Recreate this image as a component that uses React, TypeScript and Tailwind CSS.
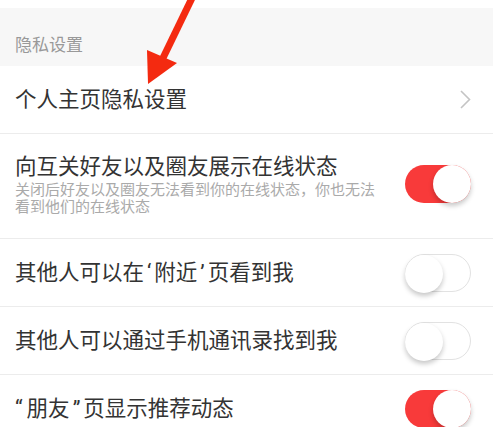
import React from "react";

const font = { fontFamily: 'Roboto, "Noto Sans CJK SC", "Noto Sans", sans-serif' };

function Toggle({ on }: { on: boolean }) {
  return (
    <div
      className={
        "relative w-[66px] h-[38px] rounded-full shrink-0 " +
        (on ? "bg-[#f83a3a]" : "bg-white border border-[#e2e2e2]")
      }
    >
      <div
        className={
          "absolute top-[0px] w-[38px] h-[38px] rounded-full bg-white shadow-[0_3px_5px_rgba(0,0,0,0.22)] " +
          (on ? "right-0" : "-left-px -top-px")
        }
      />
    </div>
  );
}

function Q({ c }: { c: string }) {
  return <span className="px-[3px]">{c}</span>;
}

function Row({
  title,
  sub,
  on,
  h = "h-[67px]",
}: {
  title: React.ReactNode;
  sub?: string;
  on: boolean;
  h?: string;
}) {
  return (
    <div className={`flex items-center justify-between pl-[15px] pr-[22px] border-b border-[#ececec] ${h}`}>
      <div className="flex flex-col">
        <div className="text-[21.5px] leading-[28px] text-[#333]">{title}</div>
        {sub && (
          <div className="text-[15px] leading-[17px] text-[#aaa] w-[365px] mt-[1px]">{sub}</div>
        )}
      </div>
      <Toggle on={on} />
    </div>
  );
}

export default function App() {
  return (
    <div className="relative w-[493px] h-[427px] overflow-hidden bg-white" style={font}>
      <div className="h-[8px] bg-white" />
      <div className="h-[58px] bg-[#f7f7f7] flex items-end pl-[15px] pb-[9px]">
        <span className="text-[17px] text-[#999] leading-[24px]">隐私设置</span>
      </div>
      <div className="h-[68px] flex items-center justify-between pl-[15px] pr-[22px] border-b border-[#ececec]">
        <span className="text-[21.5px] leading-[28px] text-[#333]">个人主页隐私设置</span>
        <svg width="11" height="19" viewBox="0 0 11 19">
          <path d="M1 1 L9.5 9.5 L1 18" fill="none" stroke="#c4c4c4" strokeWidth="1.6" />
        </svg>
      </div>
      <Row
        title="向互关好友以及圈友展示在线状态"
        sub="关闭后好友以及圈友无法看到你的在线状态，你也无法看到他们的在线状态"
        on
        h="h-[105px] pb-[4px]"
      />
      <Row
        title={
          <>
            其他人可以在<Q c="‘" />附近<Q c="’" />页看到我
          </>
        }
        on={false}
        h="h-[68px]"
      />
      <Row title="其他人可以通过手机通讯录找到我" on={false} h="h-[68px]" />
      <Row
        title={
          <>
            <span className="pr-[4px]">“</span>朋友<Q c="”" />页显示推荐动态
          </>
        }
        on
        h="h-[68px]"
      />

      {/* red annotation arrow */}
      <svg className="absolute left-0 top-0" width="493" height="427" viewBox="0 0 493 427">
        <line x1="193" y1="-4" x2="163" y2="58" stroke="#f42a10" strokeWidth="7" />
        <polygon points="148,84 147,50 177,63" fill="#f42a10" />
      </svg>
    </div>
  );
}
